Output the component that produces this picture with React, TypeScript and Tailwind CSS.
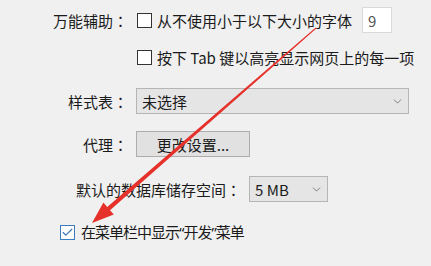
import { ChevronDown, Check } from "lucide-react";

const font = { fontFamily: '"Noto Sans CJK SC", "Noto Sans", sans-serif' };
const jp = { fontFamily: '"Noto Sans CJK JP", sans-serif' };
const latin = { fontFamily: '"Noto Sans", sans-serif' };

function Box({ checked = false }: { checked?: boolean }) {
  return checked ? (
    <div className="w-[15px] h-[15px] border border-[#3a7ec0] bg-white flex items-center justify-center shrink-0">
      <Check className="w-[13px] h-[13px] text-[#2f74b8]" strokeWidth={2} />
    </div>
  ) : (
    <div className="w-[15px] h-[15px] border border-[#333] bg-white shrink-0" />
  );
}

// centred full-width colon like the original UI font
function Colon() {
  return <span style={jp}>：</span>;
}

function Label({ children }: { children: React.ReactNode }) {
  return (
    <div className="w-[128px] text-right shrink-0">
      {children}
      <Colon />
    </div>
  );
}

export default function App() {
  return (
    <div
      className="relative w-[431px] h-[266px] bg-[#f0f0f0] text-[#1b1b1b] text-[15px] leading-none overflow-hidden"
      style={font}
    >
      <div className="flex flex-col">
        {/* 万能辅助 */}
        <div className="flex items-center h-[26px] mt-[7px]">
          <Label>万能辅助</Label>
          <div className="flex items-center ml-[9px]">
            <Box />
            <span className="ml-[5px]">从不使用小于以下大小的字体</span>
            <div className="ml-[10px] w-[30px] h-[26px] bg-white border border-[#d9d9d9] flex items-center pl-[5px] text-[#555]">
              9
            </div>
          </div>
        </div>
        <div className="flex items-center h-[26px] mt-[11px] pl-[137px]">
          <Box />
          <span className="ml-[5px]">按下 Tab 键以高亮显示网页上的每一项</span>
        </div>

        {/* 样式表 */}
        <div className="flex items-center h-[26px] mt-[18px]">
          <Label>样式表</Label>
          <div className="ml-[8px] w-[273px] h-[26px] bg-[#e5e5e5] border border-[#b5b5b5] flex items-center justify-between pl-[5px] pr-[4px]">
            <span>未选择</span>
            <ChevronDown className="w-[13px] h-[13px] text-[#666]" strokeWidth={1.5} />
          </div>
        </div>

        {/* 代理 */}
        <div className="flex items-center h-[26px] mt-[17px]">
          <Label>代理</Label>
          <button className="ml-[8px] w-[114px] h-[26px] bg-[#e1e1e1] border border-[#adadad] flex items-center justify-center">
            更改设置...
          </button>
        </div>

        {/* 数据库 */}
        <div className="flex items-center h-[26px] mt-[19px] pl-[76px]">
          <span>
            默认的数据库储存空间
            <Colon />
          </span>
          <div className="ml-[8px] w-[79px] h-[26px] bg-[#e5e5e5] border border-[#b5b5b5] flex items-center justify-between pl-[5px] pr-[4px]">
            <span>5 MB</span>
            <ChevronDown className="w-[13px] h-[13px] text-[#666]" strokeWidth={1.5} />
          </div>
        </div>

        {/* 开发菜单 */}
        <div className="flex items-center h-[26px] mt-[17px] pl-[60px]">
          <Box checked />
          <span className="ml-[6px] tracking-[-1px]">
            在菜单栏中显示<span style={latin}>“</span>开发<span style={latin}>”</span>菜单
          </span>
        </div>
      </div>

      {/* red arrow annotation */}
      <svg className="absolute inset-0 pointer-events-none" width="431" height="266" viewBox="0 0 431 266">
        <polygon
          points="315.7,27.6 316.3,28.4 110.0,210.3 113.8,214.6 92,223 103.4,202.6 107.2,206.9"
          fill="#e6302a"
        />
      </svg>
    </div>
  );
}
